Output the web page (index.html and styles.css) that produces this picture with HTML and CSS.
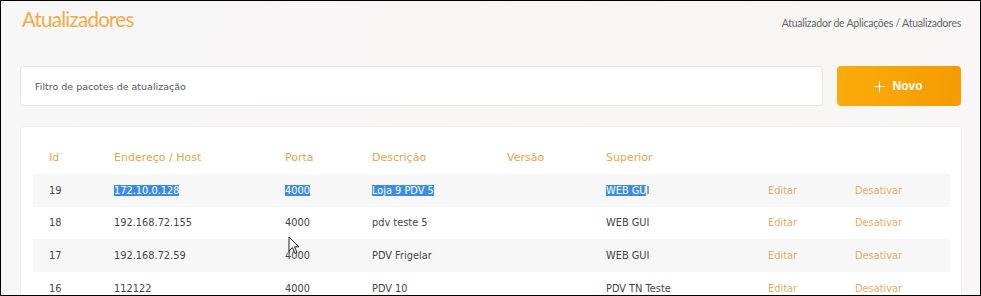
FILE: index.html
```html
<!DOCTYPE html>
<html lang="pt">
<head>
  <meta charset="UTF-8">
  <meta name="viewport" content="width=device-width, initial-scale=1.0">
  <title>Atualizadores</title>
  <link rel="stylesheet" href="styles.css">
</head>
<body>
  <div class="frame">
    <div class="top">
      <h1>Atualizadores</h1>
      <div class="breadcrumb">Atualizador de Aplicações / Atualizadores</div>
    </div>

    <div class="toolbar">
      <input class="filtro" placeholder="Filtro de pacotes de atualização">
      <button class="novo"><span class="plus"></span>Novo</button>
    </div>

    <div class="card">
      <table>
        <colgroup>
          <col style="width:65px"><col style="width:171px"><col style="width:87px"><col style="width:135px">
          <col style="width:99px"><col style="width:162px"><col style="width:87px"><col>
        </colgroup>
        <tr><th>Id</th><th>Endereço / Host</th><th>Porta</th><th>Descrição</th><th>Versão</th><th>Superior</th><th></th><th></th></tr>
        <tr>
          <td>19</td><td><span class="sel">172.10.0.128 </span></td><td><span class="sel">4000</span></td><td><span class="sel">Loja 9 PDV 5 </span></td>
          <td></td><td><span class="sel">WEB GU</span>I</td><td class="link">Editar</td><td class="link">Desativar</td>
        </tr>
        <tr>
          <td>18</td><td>192.168.72.155</td><td>4000</td><td>pdv teste 5</td>
          <td></td><td>WEB GUI</td><td class="link">Editar</td><td class="link">Desativar</td>
        </tr>
        <tr>
          <td>17</td><td>192.168.72.59</td><td>4000</td><td>PDV Frigelar</td>
          <td></td><td>WEB GUI</td><td class="link">Editar</td><td class="link">Desativar</td>
        </tr>
        <tr>
          <td>16</td><td>112122</td><td>4000</td><td>PDV 10</td>
          <td></td><td>PDV TN Teste</td><td class="link">Editar</td><td class="link">Desativar</td>
        </tr>
      </table>
    </div>

    <!-- ponteiro do mouse -->
    <svg class="cursor" width="12" height="19" viewBox="0 0 12 19">
      <path d="M1 1 L1 15 L4.5 11.5 L7 17.5 L9 16.6 L6.6 10.8 L11 10.8 Z" fill="#fff" stroke="#222" stroke-width="1" stroke-linejoin="round"/>
    </svg>
  </div>
</body>
</html>
```

FILE: styles.css
```css
* {
  box-sizing: border-box;
}
html, body {
  margin: 0;
  padding: 0;
}
body {
  font-family: "DejaVu Sans", Verdana, sans-serif;
  color: #444;
}
.frame {
  position: relative;
  width: 981px;
  height: 296px;
  border: 1px solid #000;
  overflow: hidden;
  background: linear-gradient(100deg, #f7f7f7 0%, #f9f5f5 60%, #f8f6f6 100%);
  padding: 0 19px 0 18px;
}
.top {
  display: flex;
  justify-content: space-between;
  align-items: baseline;
  padding: 0 0 0 3px;
  height: 65px;
}
h1 {
  margin: 0;
  padding-top: 4px;
  font-family: Lato, sans-serif;
  font-weight: 400;
  font-size: 20.5px;
  letter-spacing: -0.75px;
  color: #f4aa45;
  line-height: 28px;
}
.breadcrumb {
  font-family: Lato, sans-serif;
  font-size: 10.5px;
  letter-spacing: -0.25px;
  color: #666;
}
.toolbar {
  display: flex;
  gap: 14px;
  margin-left: 1px;
  height: 40px;
}
.filtro {
  flex: 1;
  height: 40px;
  padding: 0 14px;
  border: 1px solid #e6e6e6;
  border-radius: 4px;
  background: #fff;
  font-family: "DejaVu Sans", Verdana, sans-serif;
  font-size: 9.5px;
  color: #555;
  outline: none;
}
.filtro::placeholder {
  color: #555;
}
.novo {
  width: 124px;
  height: 40px;
  border: none;
  border-radius: 4px;
  background: linear-gradient(90deg, #fbab0c, #f59b00);
  color: #fff;
  font-family: "Liberation Sans", Arial, sans-serif;
  font-weight: bold;
  font-size: 12px;
  display: flex;
  align-items: center;
  justify-content: center;
  gap: 8px;
  padding-left: 4px;
}
.plus {
  position: relative;
  width: 11px;
  height: 11px;
}
.plus::before, .plus::after {
  content: "";
  position: absolute;
  background: #fff;
}
.plus::before {
  left: 5px;
  top: 0;
  width: 1px;
  height: 11px;
}
.plus::after {
  top: 5px;
  left: 0;
  height: 1px;
  width: 11px;
}
.card {
  margin: 20px 0 0 1px;
  width: 942px;
  height: 200px;
  background: #fff;
  border: 1px solid #eeeeee;
  border-radius: 4px;
  padding: 14px 11px 0 12px;
}
table {
  width: 100%;
  border-collapse: collapse;
  table-layout: fixed;
}
th, td {
  text-align: left;
  padding: 0 0 0 16px;
  white-space: nowrap;
}
th {
  height: 33px;
  font-weight: normal;
  font-size: 11px;
  color: #e9a445;
}
td {
  height: 32.6px;
  font-size: 9.8px;
  color: #444;
}
tr:nth-child(even) td {
  background: #f8f7f7;
}
td.link {
  color: #e4ad5f;
}
.sel {
  background: #3b8de4;
  color: #fff;
}
.cursor {
  position: absolute;
  left: 287px;
  top: 235px;
}
```
